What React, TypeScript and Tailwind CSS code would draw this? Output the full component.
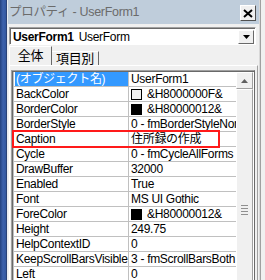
import React from 'react';

type Row = { name: string; value: string; swatch?: string; selected?: boolean };

const rows: Row[] = [
  { name: '(オブジェクト名)', value: 'UserForm1', selected: true },
  { name: 'BackColor', value: '&H8000000F&', swatch: 'bg-[#f0f0f0]' },
  { name: 'BorderColor', value: '&H80000012&', swatch: 'bg-black' },
  { name: 'BorderStyle', value: '0 - fmBorderStyleNone' },
  { name: 'Caption', value: '住所録の作成' },
  { name: 'Cycle', value: '0 - fmCycleAllForms' },
  { name: 'DrawBuffer', value: '32000' },
  { name: 'Enabled', value: 'True' },
  { name: 'Font', value: 'MS UI Gothic' },
  { name: 'ForeColor', value: '&H80000012&', swatch: 'bg-black' },
  { name: 'Height', value: '249.75' },
  { name: 'HelpContextID', value: '0' },
  { name: 'KeepScrollBarsVisible', value: '3 - fmScrollBarsBoth' },
  { name: 'Left', value: '0' },
  { name: 'MouseIcon', value: '(なし)' },
];

function PropRow({ row }: { row: Row }) {
  return (
    <div className="flex h-[15px] border-b border-[#c0c0c0]">
      <div className="flex w-[116px] shrink-0 border-l border-r border-[#c0c0c0] pl-px">
        <div
          className={
            'w-full overflow-hidden whitespace-nowrap pl-px leading-[14px] ' +
            (row.selected ? 'bg-[#3399ff] text-white' : 'text-black')
          }
        >
          {row.name}
        </div>
      </div>
      <div className="flex min-w-0 flex-1 items-center overflow-hidden whitespace-nowrap pl-[2px] leading-[14px] text-black">
        {row.swatch && (
          <span className={'mr-[5px] h-[11px] w-[11px] shrink-0 border border-black ' + row.swatch} />
        )}
        {row.value}
      </div>
    </div>
  );
}

function Scrollbar() {
  return (
    <div className="flex w-[17px] shrink-0 flex-col bg-[#f4f4f4]">
      <div className="flex h-[17px] items-center justify-center border-t border-l border-white border-r border-b border-r-[#a0a0a0] border-b-[#a0a0a0] bg-[#f0f0f0]">
        <svg width="7" height="4" viewBox="0 0 7 4">
          <path d="M3.5 0 L7 4 L0 4 Z" fill="#606060" />
        </svg>
      </div>
      <div className="flex h-[242px] shrink-0 items-center justify-center border-t border-l border-white border-r border-b border-r-[#a0a0a0] border-b-[#a0a0a0] bg-[#f0f0f0] pr-px">
        <div className="flex flex-col gap-[2px]">
          <div className="h-px w-[7px] bg-[#909090]" />
          <div className="h-px w-[7px] bg-[#909090]" />
          <div className="h-px w-[7px] bg-[#909090]" />
          <div className="h-px w-[7px] bg-[#909090]" />
        </div>
      </div>
    </div>
  );
}

export default function App() {
  return (
    <div className="flex h-[280px] w-[265px] overflow-hidden bg-[#f0f0f0] font-['Liberation_Sans','Noto_Sans_CJK_JP',sans-serif] text-[12px] tracking-[-0.3px]">
      <div className="w-[6px] shrink-0 bg-gradient-to-r from-[#24427f] via-[#3d62ad] to-[#3358a0]" />
      <div className="w-px shrink-0 bg-[#2a4277]" />
      <div className="w-px shrink-0 bg-[#e8ecf2]" />

      <div className="flex w-[251px] shrink-0 flex-col">
        <div className="flex h-[24px] shrink-0 items-center justify-between bg-[#bfcddb] pl-px pr-[3px]">
          <span className="text-[12.5px] text-[#6b6b6b]">プロパティ - UserForm1</span>
          <div className="mt-[2px] flex h-[16px] w-[16px] items-center justify-center border-t border-l border-white border-r border-b border-r-[#505050] border-b-[#505050] bg-[#f0f0f0]">
            <svg width="10" height="9" viewBox="0 0 10 9">
              <path d="M1 1 L9 8 M9 1 L1 8" stroke="#000" strokeWidth="2" />
            </svg>
          </div>
        </div>

        <div className="ml-px mt-[3px] flex h-[18px] w-[247px] items-center border-t border-l border-[#a0a0a0] border-r border-b border-r-white border-b-white">
          <div className="flex h-full flex-1 items-center border-t border-l border-[#696969] bg-white pl-[2px]">
            <span className="font-bold">UserForm1</span>
            <span className="ml-[5px]">UserForm</span>
            <div className="ml-auto mr-px flex h-[14px] w-[16px] items-center justify-center border-t border-l border-white border-r border-b border-r-[#696969] border-b-[#696969] bg-[#f0f0f0]">
              <svg width="7" height="4" viewBox="0 0 7 4">
                <path d="M0 0 L7 0 L3.5 4 Z" fill="#000" />
              </svg>
            </div>
          </div>
        </div>

        <div className="mt-[2px] flex h-[18px] items-end">
          <div className="relative z-10 ml-px flex h-[19px] w-[43px] items-center justify-center border-t border-l border-white border-r border-r-[#696969] bg-[#f0f0f0] pb-px text-[13px]">
            全体
          </div>
          <div className="mb-[-1px] flex h-[15px] w-[47px] items-center justify-center border-t border-white border-r border-r-[#696969] text-[13px]">
            項目別
          </div>
        </div>

        <div className="ml-px flex w-[249px] flex-1 flex-col border-t border-l border-white border-r border-r-[#a0a0a0]">
          <div className="relative ml-px mt-[4px] flex w-[244px] flex-1 border-t border-l border-[#a0a0a0] border-r border-r-[#696969]">
            <div className="flex flex-1 border-t border-l border-[#696969] bg-white">
              <div className="flex w-[223px] flex-col">
                {rows.map((row) => (
                  <PropRow key={row.name} row={row} />
                ))}
              </div>
              <Scrollbar />
            </div>
            <div className="pointer-events-none absolute left-0 top-[59px] h-[18px] w-[208px] border-2 border-[#ff1a1a]" />
          </div>
        </div>
      </div>

      <div className="w-px shrink-0 bg-[#d8d8d8]" />
      <div className="w-px shrink-0 bg-[#a0a0a0]" />
      <div className="flex-1 bg-[#f0f0f0]" />
    </div>
  );
}
